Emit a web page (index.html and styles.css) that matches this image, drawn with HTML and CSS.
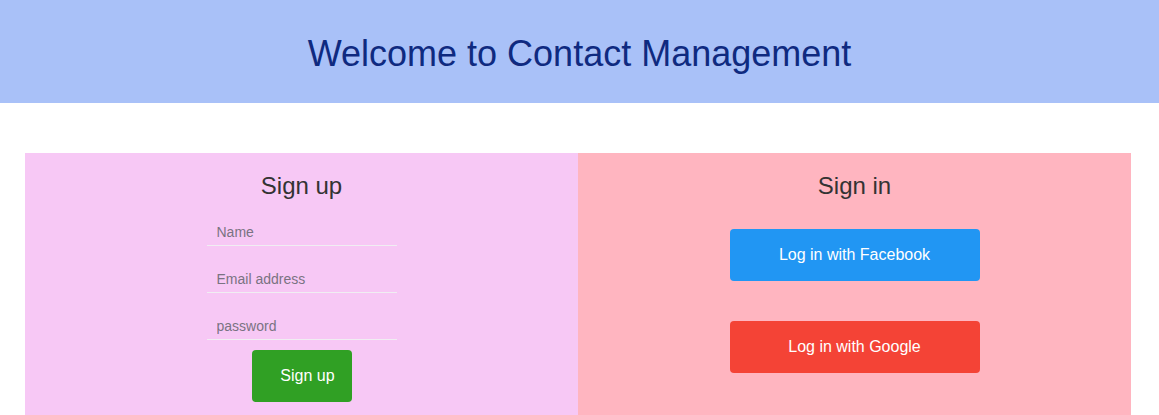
FILE: index.html
```html
<!DOCTYPE html>
<html lang="en">
<head>
<meta charset="utf-8">
<title>Contact Management</title>
<link rel="stylesheet" href="styles.css">
</head>
<body>
<header class="banner">
  <h1 class="banner-title">Welcome to Contact Management</h1>
</header>
<main class="panels">
  <section class="panel panel-signup">
    <h2 class="panel-title">Sign up</h2>
    <form class="signup-form">
      <input class="field" type="text" placeholder="Name">
      <input class="field" type="email" placeholder="Email address">
      <input class="field" type="password" placeholder="password">
      <button class="btn btn-signup" type="button">Sign up</button>
    </form>
  </section>
  <section class="panel panel-signin">
    <h2 class="panel-title">Sign in</h2>
    <div class="signin-buttons">
      <button class="btn btn-social btn-facebook" type="button">Log in with Facebook</button>
      <button class="btn btn-social btn-google" type="button">Log in with Google</button>
    </div>
  </section>
</main>
</body>
</html>
```

FILE: styles.css
```css
* { box-sizing: border-box; }

html, body {
  margin: 0;
  padding: 0;
  background: #ffffff;
  font-family: "Liberation Sans", Arial, sans-serif;
}

.banner {
  height: 103px;
  padding-top: 4px;
  background: #a9c1f8;
  display: flex;
  align-items: center;
  justify-content: center;
}

.banner-title {
  margin: 0;
  font-size: 36px;
  font-weight: normal;
  color: #0f2a80;
}

.panels {
  display: grid;
  grid-template-columns: 1fr 1fr;
  width: 1106px;
  margin: 50px 0 0 25px;
  min-height: 300px;
}

.panel {
  display: flex;
  flex-direction: column;
  align-items: center;
  padding-top: 19px;
}

.panel-signup { background: #f7c8f5; }
.panel-signin { background: #ffb5c0; }

.panel-title {
  margin: 0;
  font-size: 24px;
  font-weight: normal;
  color: #333333;
  line-height: 28px;
}

.signup-form {
  display: flex;
  flex-direction: column;
  align-items: center;
  margin-top: 16px;
}

.field {
  width: 190px;
  height: 30px;
  margin: 0 0 17px;
  padding: 2px 10px 0;
  border: none;
  border-bottom: 1px solid #f0eef2;
  background: transparent;
  font-family: "Liberation Sans", Arial, sans-serif;
  font-size: 14px;
  color: #333;
  outline: none;
}

.field:last-of-type { margin-bottom: 10px; }

.field::placeholder { color: #7a7382; }

.btn {
  border: none;
  border-radius: 4px;
  color: #ffffff;
  font-family: "Liberation Sans", Arial, sans-serif;
  font-size: 16px;
  height: 52px;
  cursor: pointer;
}

.btn-signup {
  width: 100px;
  padding: 0 0 0 12px;
  background: #30a024;
}

.signin-buttons {
  display: flex;
  flex-direction: column;
  gap: 40px;
  margin-top: 29px;
}

.btn-social { width: 250px; }
.btn-facebook { background: #2196f3; }
.btn-google { background: #f44336; }
```
